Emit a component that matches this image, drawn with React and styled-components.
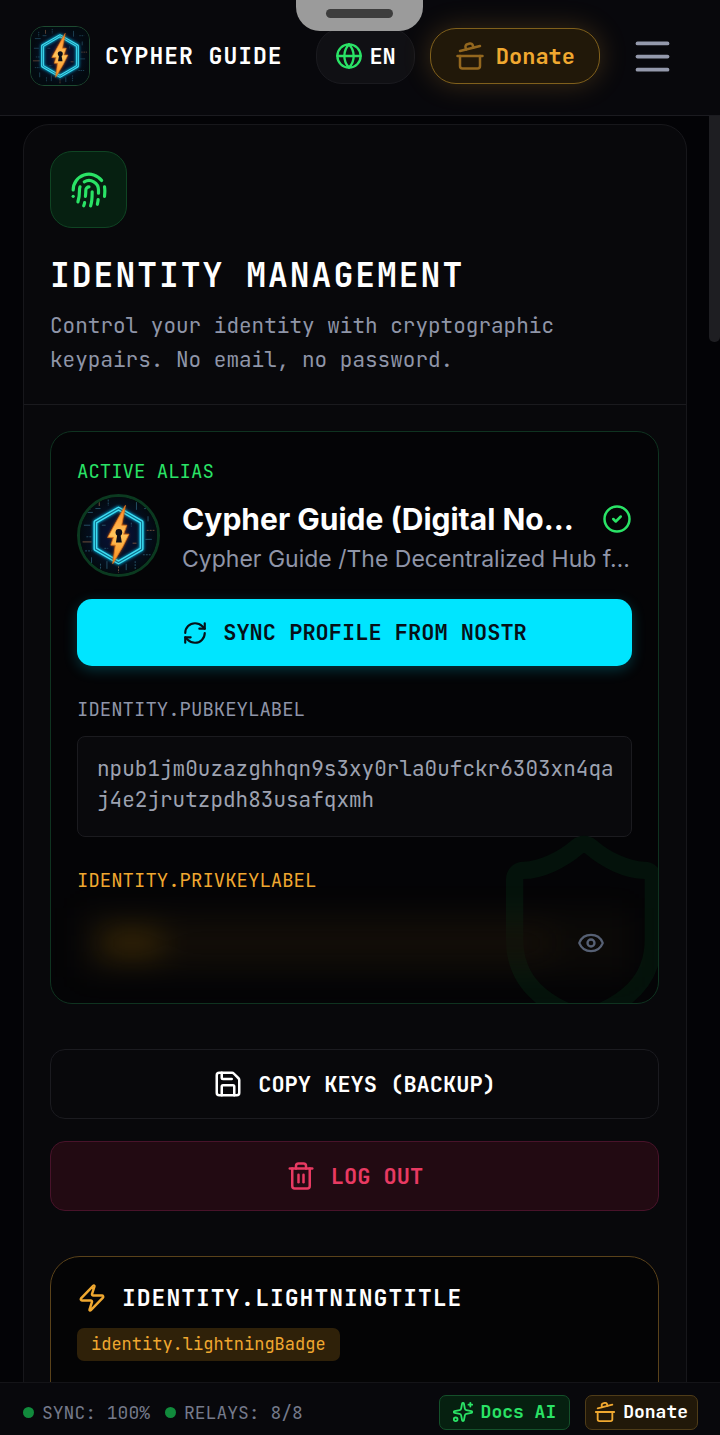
import React, { useState } from 'react';
import styled, { createGlobalStyle, css } from 'styled-components';
import {
  CircleCheck,
  CookingPot,
  Eye,
  Fingerprint,
  Globe,
  Menu,
  RefreshCw,
  Save,
  Shield,
  Sparkles,
  Trash2,
  Zap,
} from 'lucide-react';

const green = '#2ae366';
const amber = '#f0a830';
const grey = '#8f95a8';
const mono = '"JetBrains Mono", "DejaVu Sans Mono", "Liberation Mono", monospace';
const sans = 'Inter, "Liberation Sans", sans-serif';

const GlobalStyle = createGlobalStyle`
  * {
    box-sizing: border-box;
  }

  body {
    margin: 0;
    background: #030306;
    color: white;
    font-family: ${mono};
  }

  h1, h2, p {
    margin: 0;
  }

  button, textarea {
    font-family: inherit;
    cursor: pointer;
  }

  svg {
    display: block;
    flex-shrink: 0;
  }
`

const Page = styled.div`
  height: 100vh;
  display: flex;
  flex-direction: column;
`

// Header

const TopBar = styled.header`
  position: relative;
  display: flex;
  align-items: center;
  gap: 15px;
  padding: 26px 30px 29px;
  background: #08080c;
  border-bottom: 1px solid #1b1b20;
`

const PullTab = styled.div`
  position: absolute;
  top: 0;
  left: 50%;
  margin-left: -64px;
  width: 127px;
  height: 31px;
  z-index: 2;
  display: flex;
  justify-content: center;
  padding-top: 9px;
  background: #9b9b9b;
  border-radius: 0 0 24px 24px;

  &::before {
    content: '';
    width: 67px;
    height: 9px;
    border-radius: 5px;
    background: #3d3d3d;
  }
`

const Brand = styled.a`
  display: flex;
  align-items: center;
  gap: 15px;
  flex: 1;
  color: white;
  font-size: 23px;
  font-weight: bold;
  letter-spacing: 1px;
  white-space: nowrap;
  text-decoration: none;
`

const LogoFrame = styled.span`
  flex-shrink: 0;
  width: ${props => props.round ? '83px' : '60px'};
  height: ${props => props.round ? '83px' : '60px'};
  border-radius: ${props => props.round ? '50%' : '14px'};
  border: ${props => props.round ? '3px solid #0b3a20' : '1px solid #1c4a30'};
  overflow: hidden;

  svg {
    width: 100%;
    height: 100%;
  }
`

const Pill = styled.button`
  height: 56px;
  display: flex;
  align-items: center;
  gap: 6px;
  padding: 0 18px;
  border-radius: 26px;
  border: 1px solid #1a1a1f;
  background: #101014;
  color: white;
  font-size: 22px;
  font-weight: bold;

  ${props => props.gold && css`
    gap: 11px;
    padding: 0 24px;
    border-color: #80601c;
    background: #211809;
    color: ${amber};
    box-shadow: 0 0 28px rgba(240, 168, 48, 0.22);

    svg {
      opacity: 0.55;
    }
  `}
`

const MenuButton = styled.button`
  padding: 0 15px;
  border: none;
  background: none;
  color: #9499ac;
`

// Scrolling area

const Main = styled.main`
  flex: 1;
  min-height: 0;
  display: flex;
  overflow: hidden;
`

const Content = styled.div`
  flex: 1;
  min-width: 0;
  padding: 8px 22px 0 23px;
`

const ScrollTrack = styled.div`
  width: 11px;

  &::before {
    content: '';
    display: block;
    height: 226px;
    border-radius: 0 0 5px 5px;
    background: #1e1e22;
  }
`

const Panel = styled.section`
  border: 1px solid #17171b;
  border-radius: 26px;
  background: #08080b;
`

const PanelHead = styled.div`
  padding: 26px 26px 27px;
  border-bottom: 1px solid #1a1a1e;
`

const IconTile = styled.div`
  width: 77px;
  height: 77px;
  display: flex;
  align-items: center;
  justify-content: center;
  border: 1px solid #0f4423;
  border-radius: 22px;
  background: #062011;
  color: ${green};
`

const Title = styled.h1`
  margin-top: 24px;
  font-size: 33px;
  line-height: 46px;
  letter-spacing: 2px;
`

const Intro = styled.p`
  margin-top: 11px;
  color: ${grey};
  font-size: 21px;
  line-height: 34px;
`

const PanelBody = styled.div`
  display: flex;
  flex-direction: column;
  gap: 45px;
  padding: 26px 27px 60px 26px;
`

const AliasCard = styled.section`
  position: relative;
  padding: 26px;
  border: 1px solid #0f3320;
  border-radius: 22px;
  background: #040406;
  overflow: hidden;
`

const Watermark = styled(Shield)`
  position: absolute;
  right: -30px;
  bottom: -32px;
  color: #04120b;
`

const Label = styled.label`
  display: block;
  color: ${props => props.color || grey};
  font-size: 19px;
  line-height: 28px;
`

const Profile = styled.div`
  display: flex;
  align-items: center;
  gap: 22px;
  margin-top: 8px;
`

const ProfileText = styled.div`
  flex: 1;
  min-width: 0;
  font-family: ${sans};
`

const NameRow = styled.div`
  display: flex;
  align-items: center;
  gap: 15px;
  color: ${green};
`

const Name = styled.h2`
  flex: 1;
  color: white;
  font-size: 30px;
  line-height: 46px;
  overflow: hidden;
  white-space: nowrap;
  text-overflow: ellipsis;
`

const About = styled.p`
  color: ${grey};
  font-size: 23px;
  line-height: 34px;
  overflow: hidden;
  white-space: nowrap;
  text-overflow: ellipsis;
`

const Button = styled.button`
  width: 100%;
  height: 70px;
  display: flex;
  align-items: center;
  justify-content: center;
  gap: 15px;
  border: 1px solid #1b1b20;
  border-radius: 15px;
  background: #08080b;
  color: white;
  font-size: 22px;
  font-weight: bold;

  ${props => props.danger && css`
    border-color: #48132a;
    background: #220a12;
    color: #e83a62;
  `}

  ${props => props.primary && css`
    height: 67px;
    margin: 22px 0 30px;
    border: none;
    background: #00e5ff;
    color: #061018;
    box-shadow: 0 4px 14px rgba(0, 229, 255, 0.22);
  `}
`

const Actions = styled.div`
  display: flex;
  flex-direction: column;
  gap: 22px;
`

const KeyBox = styled.textarea`
  display: block;
  width: 100%;
  height: 101px;
  margin: 12px 0 30px;
  padding: 16px 17px 16px 19px;
  border: 1px solid #1b1b1f;
  border-radius: 8px;
  outline: none;
  resize: none;
  overflow: hidden;
  background: #09090c;
  color: #9da2b1;
  font-size: 21px;
  line-height: 31px;
  word-break: break-all;
`

const SecretRow = styled.div`
  display: grid;
  align-items: center;
  height: 69px;
  margin-top: 13px;

  > * {
    grid-area: 1 / 1;
  }
`

const SecretBlur = styled.div`
  height: 69px;
  display: flex;
  align-items: center;
  gap: 8px;
  padding: 0 80px 0 24px;
  background: rgba(255, 190, 60, 0.03);
  filter: blur(15px);

  &::before,
  &::after {
    content: '';
    height: 26px;
    background: #3a2805;
  }

  &::before {
    width: 62px;
  }

  &::after {
    flex: 1;
    background: #150f08;
  }
`

const EyeButton = styled.button`
  justify-self: end;
  padding: 8px;
  margin-right: 19px;
  border: none;
  background: none;
  color: #566074;
  z-index: 1;
`

const LightningCard = styled.section`
  padding: 26px;
  border: 1px solid #5a421a;
  border-radius: 30px;
  background: #040405;
  min-height: 260px;
`

const LightningTitle = styled.h2`
  display: flex;
  align-items: center;
  gap: 15px;
  font-size: 23px;
  line-height: 30px;
  letter-spacing: 1px;

  svg {
    color: ${amber};
  }
`

const Badge = styled.span`
  display: inline-block;
  margin-top: 15px;
  padding: 0 14px;
  border-radius: 7px;
  background: #2f2109;
  color: ${amber};
  font-size: 17px;
  line-height: 33px;
`

// Footer

const StatusBar = styled.footer`
  display: flex;
  align-items: center;
  gap: 15px;
  padding: 12px 22px 5px 23px;
  border-top: 1px solid #141418;
  background: #08080c;
`

const Status = styled.span`
  display: flex;
  align-items: center;
  gap: 8px;
  color: #757a8b;
  font-size: 18px;
  line-height: 24px;
  white-space: nowrap;

  &::before {
    content: '';
    width: 11px;
    height: 11px;
    border-radius: 50%;
    background: #118a3c;
  }
`

const Spacer = styled.span`
  flex: 1;
`

const SmallButton = styled.button`
  height: 35px;
  display: flex;
  align-items: center;
  gap: 7px;
  padding: 0 13px 2px 12px;
  border: 1px solid #14502a;
  border-radius: 7px;
  background: #062010;
  color: ${green};
  font-size: 18px;
  font-weight: bold;
  white-space: nowrap;

  ${props => props.gold && css`
    padding: 0 9px 2px 8px;
    border-color: #4f3c18;
    background: #211809;
    color: white;

    svg {
      color: ${amber};
    }
  `}
`

// short circuit traces scattered behind the hexagon: x, y, length, direction
const traces = [
  [4, 12, 6, 'h'], [8, 5, 5, 'v'], [15, 3, 4, 'v'], [22, 2, 5, 'v'], [44, 4, 6, 'v'],
  [50, 9, 5, 'h'], [53, 15, 4, 'v'], [52, 26, 6, 'h'], [51, 33, 5, 'h'], [49, 45, 6, 'h'],
  [3, 22, 5, 'h'], [5, 31, 4, 'h'], [2, 35, 7, 'h'], [4, 42, 5, 'h'], [9, 47, 5, 'v'],
  [16, 52, 5, 'v'], [21, 50, 6, 'v'], [30, 54, 5, 'v'], [36, 52, 5, 'v'], [43, 50, 7, 'v'],
  [17, 22, 3, 'h'], [19, 40, 3, 'h'], [41, 36, 3, 'h'], [40, 20, 3, 'v'], [12, 9, 4, 'h'],
];

const hexagon = 'M30 9 48 19.5V40.5L30 51 12 40.5V19.5z';
const bolt = 'M35.4 6.5 27 21.5 21.5 31.5H26L24 37.5H27.5L25.5 52 33.5 38.5 38.2 29H34L36.5 22H32.5z';

const Logo = () => (
  <svg viewBox="0 0 60 60" aria-hidden="true">
    <defs>
      <radialGradient id="night">
        <stop offset="0" stopColor="#08103a" />
        <stop offset="0.6" stopColor="#051024" />
        <stop offset="1" stopColor="#030a10" />
      </radialGradient>
      <linearGradient id="fire" x1="0" y1="0" x2="0" y2="1">
        <stop offset="0" stopColor="#ff8420" />
        <stop offset="0.5" stopColor="#ffc45a" />
        <stop offset="1" stopColor="#f98a1c" />
      </linearGradient>
      <filter id="glow" x="-30%" y="-30%" width="160%" height="160%">
        <feGaussianBlur stdDeviation="1.4" />
      </filter>
    </defs>
    <rect width="60" height="60" fill="url(#night)" />
    {traces.map(([x, y, len, dir], i) => (
      <path
        key={i}
        d={`M${x} ${y}${dir}${len}`}
        stroke={i % 5 === 2 ? '#7a5540' : '#27566c'}
        strokeWidth="0.7"
        strokeDasharray={i % 2 ? '1.5 0.8' : 'none'}
      />
    ))}
    <g fill="none" strokeLinejoin="round">
      <path d={hexagon} stroke="#00b0e0" strokeWidth="3.6" filter="url(#glow)" />
      <path d={hexagon} stroke="#3fdcf0" strokeWidth="3" />
      <path d={hexagon} stroke="#0a6a88" strokeWidth="0.8" />
    </g>
    <path d={bolt} fill="#c8560c" filter="url(#glow)" />
    <path d={bolt} fill="url(#fire)" stroke="#d9701a" strokeWidth="0.6" />
    <circle cx="30.3" cy="27.6" r="2.6" fill="#0a0c18" />
    <path d="M29.2 28.500h2.200l1.200 7h-4.600z" fill="#0a0c18" />
  </svg>
);

export default function App() {
  const [pubkey] = useState('npub1jm0uzazghhqn9s3xy0rla0ufckr6303xn4qaj4e2jrutzpdh83usafqxmh');

  return (
    <Page>
      <GlobalStyle />
      <TopBar>
        <PullTab />
        <Brand href="#">
          <LogoFrame><Logo /></LogoFrame>
          CYPHER GUIDE
        </Brand>
        <Pill>
          <Globe size={28} color={green} />
          EN
        </Pill>
        <Pill gold>
          <CookingPot size={30} />
          Donate
        </Pill>
        <MenuButton aria-label="Menu">
          <Menu size={45} />
        </MenuButton>
      </TopBar>

      <Main>
        <Content>
          <Panel>
            <PanelHead>
              <IconTile><Fingerprint size={38} /></IconTile>
              <Title>IDENTITY MANAGEMENT</Title>
              <Intro>Control your identity with cryptographic keypairs. No email, no password.</Intro>
            </PanelHead>
            <PanelBody>
              <AliasCard>
                <Watermark size={208} />
                <Label as="p" color={green}>ACTIVE ALIAS</Label>
                <Profile>
                  <LogoFrame round><Logo /></LogoFrame>
                  <ProfileText>
                    <NameRow>
                      <Name>Cypher Guide (Digital No…</Name>
                      <CircleCheck size={30} />
                    </NameRow>
                    <About>Cypher Guide /The Decentralized Hub f…</About>
                  </ProfileText>
                </Profile>
                <Button primary>
                  <RefreshCw size={26} />
                  SYNC PROFILE FROM NOSTR
                </Button>
                <Label htmlFor="pubkey">IDENTITY.PUBKEYLABEL</Label>
                <KeyBox id="pubkey" readOnly spellCheck={false} value={pubkey} />
                <Label as="p" color={amber}>IDENTITY.PRIVKEYLABEL</Label>
                <SecretRow>
                  <SecretBlur />
                  <EyeButton aria-label="Show private key">
                    <Eye size={28} />
                  </EyeButton>
                </SecretRow>
              </AliasCard>

              <Actions>
                <Button>
                  <Save size={30} />
                  COPY KEYS (BACKUP)
                </Button>
                <Button danger>
                  <Trash2 size={30} />
                  LOG OUT
                </Button>
              </Actions>

              <LightningCard>
                <LightningTitle>
                  <Zap size={30} />
                  IDENTITY.LIGHTNINGTITLE
                </LightningTitle>
                <Badge>identity.lightningBadge</Badge>
              </LightningCard>
            </PanelBody>
          </Panel>
        </Content>
        <ScrollTrack />
      </Main>

      <StatusBar>
        <Status>SYNC: 100%</Status>
        <Status>RELAYS: 8/8</Status>
        <Spacer />
        <SmallButton>
          <Sparkles size={22} />
          Docs AI
        </SmallButton>
        <SmallButton gold>
          <CookingPot size={22} />
          Donate
        </SmallButton>
      </StatusBar>
    </Page>
  );
}
